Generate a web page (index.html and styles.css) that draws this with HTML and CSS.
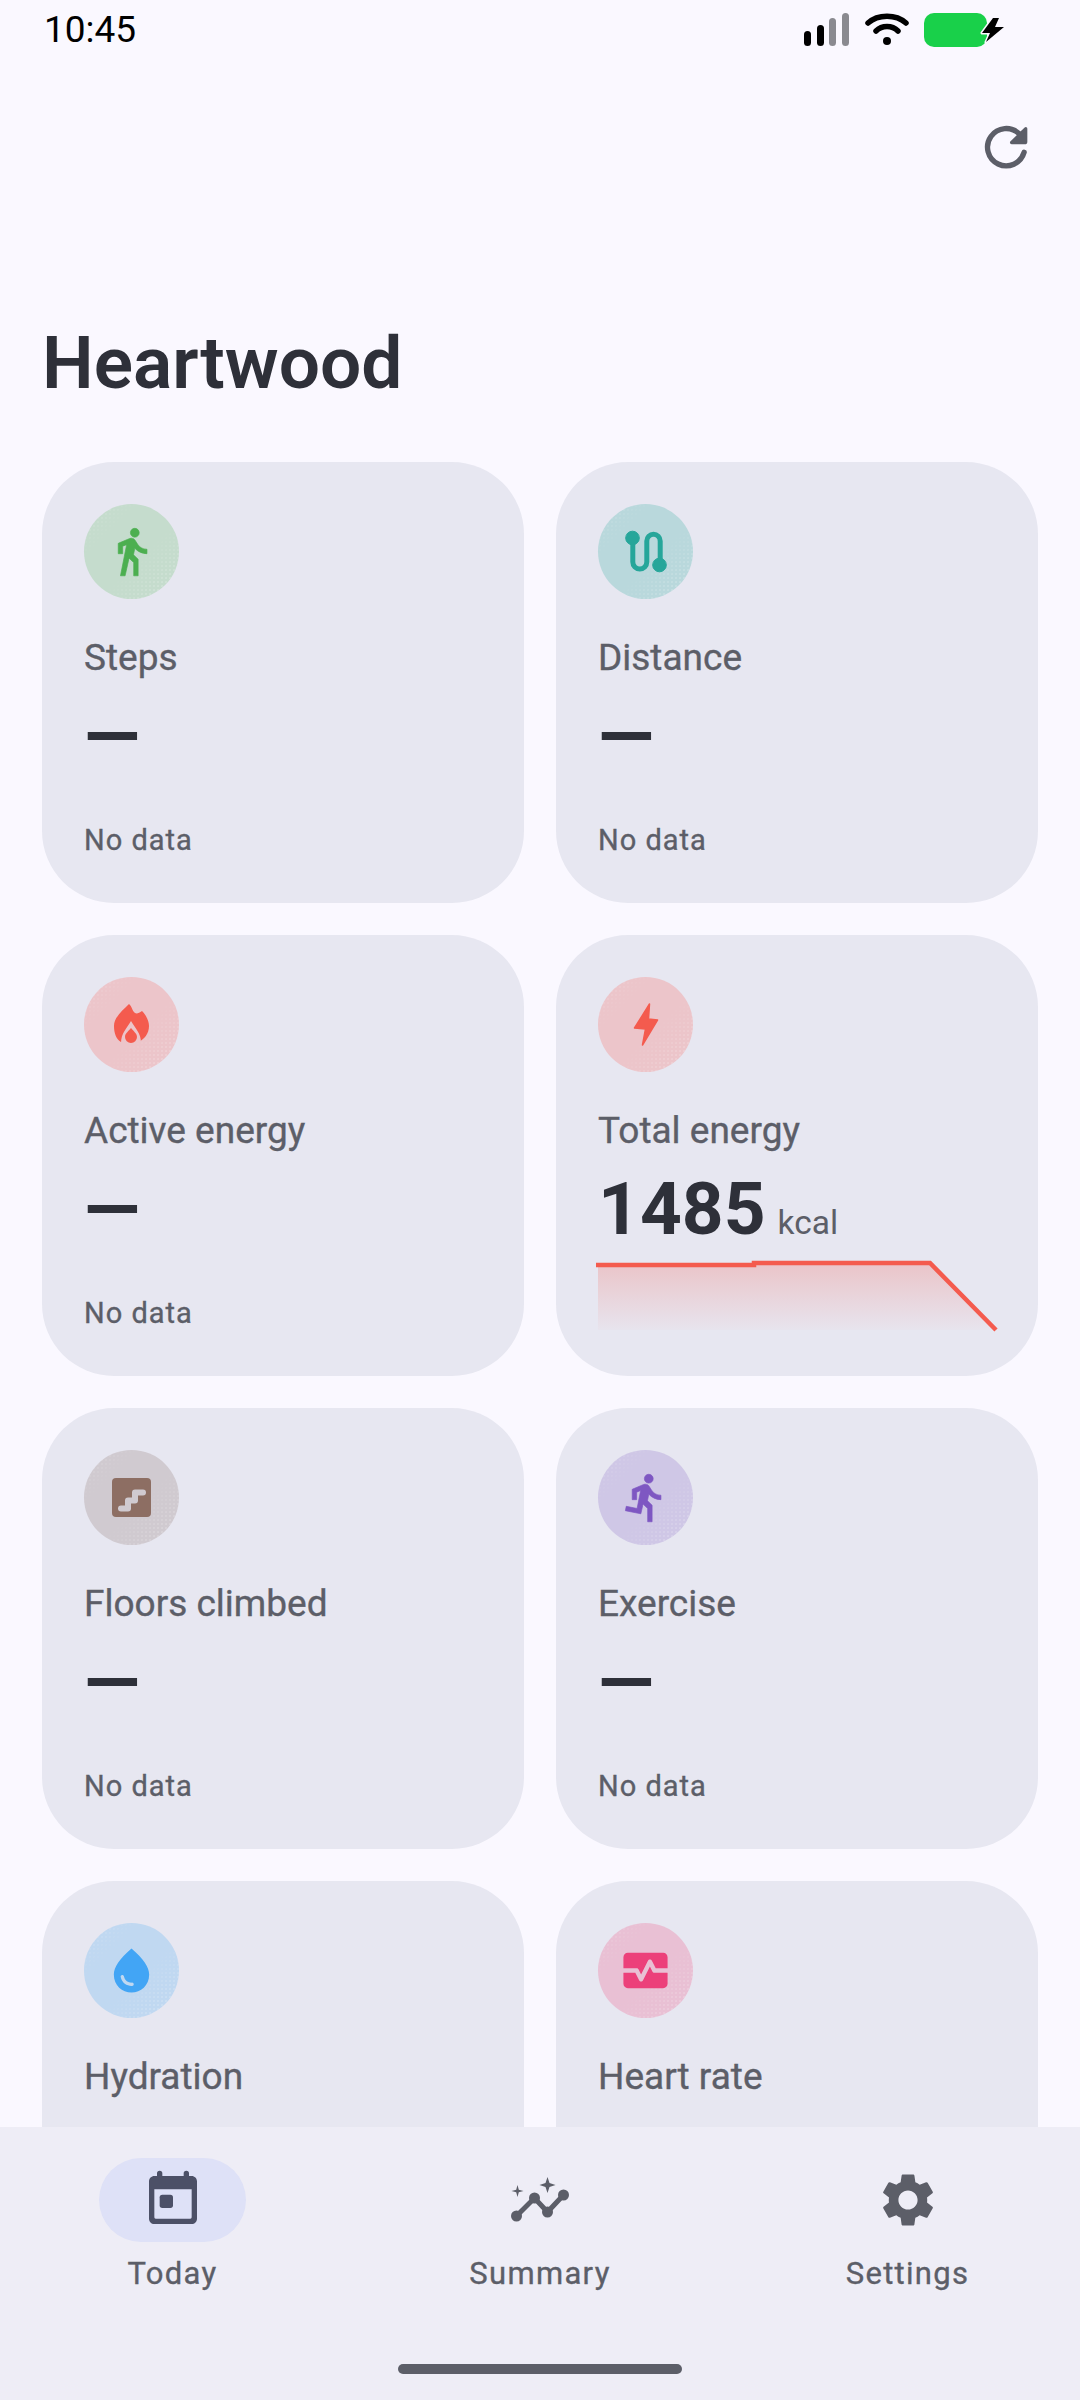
FILE: index.html
```html
<!DOCTYPE html>
<html lang="en">

<head>
    <meta charset="UTF-8">
    <meta name="viewport" content="width=device-width, initial-scale=1.0">
    <title>Heartwood</title>
    <link rel="stylesheet" href="styles.css">
</head>

<body>
    <div class="status-bar">
        <span class="clock">10:45</span>
        <div class="status-icons">
            <svg class="signal" width="46" height="34" viewBox="0 0 46 34">
                <rect x="0" y="18" width="7" height="15" rx="3.5" fill="#000" />
                <rect x="13" y="12" width="7" height="21" rx="3.5" fill="#000" />
                <rect x="25" y="5" width="7" height="28" rx="3.5" fill="#8a8a90" />
                <rect x="38" y="0" width="7" height="33" rx="3.5" fill="#8a8a90" />
            </svg>
            <svg class="wifi" width="44" height="34" viewBox="0 0 44 34">
                <path d="M3 10 C13 1 31 1 41 10" fill="none" stroke="#000" stroke-width="5.5" stroke-linecap="round" />
                <path d="M11 18 C17 12 27 12 33 18" fill="none" stroke="#000" stroke-width="5.5" stroke-linecap="round" />
                <circle cx="22" cy="28" r="4" fill="#000" />
            </svg>
            <svg class="battery" width="82" height="36" viewBox="0 0 82 36">
                <rect x="0" y="1" width="63" height="34" rx="10" fill="#19d04a" />
                <path d="M69 6 L58 21 L66 21 L62 30 L80 15 L71 15 L75 6 Z" fill="#000" stroke="#faf8ff" stroke-width="3" paint-order="stroke" stroke-linejoin="round" />
            </svg>
        </div>
    </div>

    <div class="toolbar">
        <svg class="refresh" width="64" height="64" viewBox="0 0 24 24">
            <path class="refresh-arc" d="M18.8 14A7 7 0 1 1 17 7.1" />
            <path d="M20 5.2V10a1 1 0 0 1-1 1H14.2a.7.7 0 0 1-.5-1.2L19 4.7a.6.6 0 0 1 1 .5z" />
        </svg>
    </div>

    <div class="content">
        <h1 class="page-title">Heartwood</h1>

        <div class="card-grid">
            <div class="card">
                <div class="icon-circle green">
                    <svg class="person" width="53" height="53" viewBox="0 0 24 24">
                        <path d="M13.5 5.5c1.1 0 2-.9 2-2s-.9-2-2-2-2 .9-2 2 .9 2 2 2zM9.8 8.9L7 23h2.1l1.8-8 2.1 2v6h2v-7.5l-2.1-2 .6-3C14.8 12 16.8 13 19 13v-2c-1.9 0-3.5-1-4.3-2.4l-1-1.6c-.4-.6-1-1-1.7-1-.3 0-.5.1-.8.1L6 8.3V13h2V9.6l1.8-.7" />
                    </svg>
                </div>
                <div class="card-label">Steps</div>
                <div class="card-value">—</div>
                <div class="card-note">No data</div>
            </div>

            <div class="card">
                <div class="icon-circle teal">
                    <svg width="53" height="53" viewBox="0 0 53 53">
                        <path class="route-line" d="M13.8 13V37a7 7 0 0 0 14 0V16a6.7 6.7 0 0 1 13.4 0V40" />
                        <circle cx="13.5" cy="13" r="6.8" />
                        <circle cx="40.5" cy="40" r="6.8" />
                    </svg>
                </div>
                <div class="card-label">Distance</div>
                <div class="card-value">—</div>
                <div class="card-note">No data</div>
            </div>

            <div class="card">
                <div class="icon-circle red">
                    <svg width="53" height="53" viewBox="0 0 53 53">
                        <path d="M24 6C27 8 27 13 30 15C32 16 34 15 37 13C41 17 44 23 44 28C44 36 39 41 34 44H16C11 41 9 35 9 28C9 19 18 12 24 6Z" />
                        <path class="flame-gap" d="M16 45C16 35 22 30 26 23C30 30 36 35 36 45Z" />
                        <path d="M26 30C28 33 32 35 32 39A6 6 0 0 1 20 39C20 35 24 33 26 30Z" />
                    </svg>
                </div>
                <div class="card-label">Active energy</div>
                <div class="card-value">—</div>
                <div class="card-note">No data</div>
            </div>

            <div class="card">
                <div class="icon-circle red">
                    <svg width="53" height="53" viewBox="0 0 53 53">
                        <path class="bolt" d="M30.5 6L15.5 30L26.5 31L23.5 47L38.5 22L29.5 21Z" />
                    </svg>
                </div>
                <div class="card-label">Total energy</div>
                <div class="card-value">1485<span class="card-unit">kcal</span></div>
                <svg class="sparkline" width="398" height="74" viewBox="0 0 398 74">
                    <defs>
                        <linearGradient id="sparkFill" x1="0" y1="0" x2="0" y2="1">
                            <stop offset="0" stop-color="#f45b4e" stop-opacity="0.25" />
                            <stop offset="1" stop-color="#f45b4e" stop-opacity="0.02" />
                        </linearGradient>
                    </defs>
                    <path d="M0 5H156V3H332L398 70H0Z" fill="url(#sparkFill)" />
                    <path d="M-2 5H156V3H332L398 70" fill="none" stroke="#f45b4e" stroke-width="4.5" />
                </svg>
            </div>

            <div class="card">
                <div class="icon-circle brown">
                    <svg width="53" height="53" viewBox="0 0 53 53">
                        <rect x="7" y="7" width="39" height="39" rx="4" />
                        <path class="stair-line" d="M16 37.5H23V29.5H30V21.5H38" />
                    </svg>
                </div>
                <div class="card-label">Floors climbed</div>
                <div class="card-value">—</div>
                <div class="card-note">No data</div>
            </div>

            <div class="card">
                <div class="icon-circle purple">
                    <svg class="person" width="53" height="53" viewBox="0 0 24 24">
                        <path d="M13.49 5.48c1.1 0 2-.9 2-2s-.9-2-2-2-2 .9-2 2 .9 2 2 2zm-3.6 13.9l1-4.4 2.1 2v6h2v-7.5l-2.1-2 .6-3c1.3 1.5 3.3 2.5 5.5 2.5v-2c-1.9 0-3.5-1-4.3-2.4l-1-1.6c-.4-.6-1-1-1.7-1-.3 0-.5.1-.8.1l-5.2 2.2v4.7h2v-3.4l1.8-.7-1.6 8.1-4.9-1-.4 2 7 1.4z" />
                    </svg>
                </div>
                <div class="card-label">Exercise</div>
                <div class="card-value">—</div>
                <div class="card-note">No data</div>
            </div>

            <div class="card">
                <div class="icon-circle blue">
                    <svg width="53" height="53" viewBox="0 0 24 24">
                        <path fill-rule="evenodd" d="M12 2c-5.33 4.55-8 8.48-8 11.8 0 4.98 3.8 8.2 8 8.2s8-3.22 8-8.2c0-3.32-2.67-7.25-8-11.8zM7.83 14c.37 0 .67.26.74.62.41 2.22 2.28 2.98 3.64 2.87.43-.02.79.32.79.75 0 .4-.32.73-.72.75-2.13.13-4.62-1.09-5.19-4.12-.08-.45.28-.87.74-.87z" />
                    </svg>
                </div>
                <div class="card-label">Hydration</div>
                <div class="card-value">0.00<span class="card-unit">L</span></div>
            </div>

            <div class="card">
                <div class="icon-circle pink">
                    <svg width="53" height="53" viewBox="0 0 24 24">
                        <path d="M15.11 12.45L14 10.24l-3.11 6.21c-.16.34-.51.55-.89.55s-.73-.21-.89-.55L7.38 13H2v5c0 1.1.9 2 2 2h16c1.1 0 2-.9 2-2v-5h-6c-.38 0-.73-.21-.89-.55zM20 4H4c-1.1 0-2 .9-2 2v5h6c.38 0 .73.21.89.55L10 13.76l3.11-6.21c.34-.68 1.45-.68 1.79 0L16.62 11H22V6c0-1.1-.9-2-2-2z" />
                    </svg>
                </div>
                <div class="card-label">Heart rate</div>
                <div class="card-value">70<span class="card-unit">bpm</span></div>
            </div>
        </div>
    </div>

    <div class="bottom-nav">
        <div class="nav-items">
            <div class="nav-item">
                <div class="nav-icon active">
                    <svg width="64" height="64" viewBox="0 0 24 24">
                        <path d="M19 3h-1V2a1 1 0 0 0-2 0v1H8V2a1 1 0 0 0-2 0v1H5C3.9 3 3 3.9 3 5v14c0 1.1.9 2 2 2h14c1.1 0 2-.9 2-2V5c0-1.1-.9-2-2-2zm-.5 16h-13a.5.5 0 0 1-.5-.5V8h14v10.5a.5.5 0 0 1-.5.5z" />
                        <rect x="7" y="10" width="5" height="5" rx="1" />
                    </svg>
                </div>
                <div class="nav-label">Today</div>
            </div>
            <div class="nav-item">
                <div class="nav-icon">
                    <svg width="64" height="64" viewBox="0 0 64 64">
                        <path class="trend-line" d="M8.5 48L26.5 30L39.5 44L55.5 27" />
                        <circle cx="8.5" cy="48" r="5.5" />
                        <circle cx="26.5" cy="30" r="5.5" />
                        <circle cx="39.5" cy="44" r="5.5" />
                        <circle cx="55.5" cy="27" r="5.5" />
                        <path d="M39.5 9L41.5 15L47.5 17L41.5 19L39.5 25L37.5 19L31.5 17L37.5 15Z" />
                        <path d="M9.5 17L10.8 21.7L15.5 23L10.8 24.3L9.5 29L8.2 24.3L3.5 23L8.2 21.7Z" />
                    </svg>
                </div>
                <div class="nav-label">Summary</div>
            </div>
            <div class="nav-item">
                <div class="nav-icon">
                    <svg width="64" height="64" viewBox="0 0 24 24">
                        <path d="M19.14 12.94c.04-.3.06-.61.06-.94 0-.32-.02-.64-.07-.94l2.03-1.58c.18-.14.23-.41.12-.61l-1.92-3.32c-.12-.22-.37-.29-.59-.22l-2.39.96c-.5-.38-1.03-.7-1.62-.94l-.36-2.54c-.04-.24-.24-.41-.48-.41h-3.84c-.24 0-.43.17-.47.41l-.36 2.54c-.59.24-1.13.57-1.62.94l-2.39-.96c-.22-.08-.47 0-.59.22L2.74 8.87c-.12.21-.08.47.12.61l2.03 1.58c-.05.3-.09.63-.09.94s.02.64.07.94l-2.03 1.58c-.18.14-.23.41-.12.61l1.92 3.32c.12.22.37.29.59.22l2.39-.96c.5.38 1.03.7 1.62.94l.36 2.54c.05.24.24.41.48.41h3.84c.24 0 .44-.17.47-.41l.36-2.54c.59-.24 1.13-.56 1.62-.94l2.39.96c.22.08.47 0 .59-.22l1.92-3.32c.12-.22.07-.47-.12-.61l-2.01-1.58zM12 15.6c-1.98 0-3.6-1.62-3.6-3.6s1.62-3.6 3.6-3.6 3.6 1.62 3.6 3.6-1.62 3.6-3.6 3.6z" />
                    </svg>
                </div>
                <div class="nav-label">Settings</div>
            </div>
        </div>
        <div class="home-bar"></div>
    </div>
</body>

</html>
```

FILE: styles.css
```css
body {
    font-family: 'Roboto', sans-serif;
    background-color: #faf8ff;
    color: #2e3039;
    margin: 0;
    padding: 0;
    width: 1080px;
    height: 2400px;
    overflow: hidden;
    display: flex;
    flex-direction: column;
}

.status-bar {
    height: 60px;
    padding: 0 74px 0 44px;
    display: flex;
    justify-content: space-between;
    align-items: center;
}

.clock {
    font-size: 37px;
    color: #000;
    line-height: 60px;
}

.status-icons {
    display: flex;
    align-items: center;
    gap: 15px;
}

.toolbar {
    margin-top: 55px;
    padding: 0 42px;
    display: flex;
    justify-content: flex-end;
}

.refresh {
    fill: #5c5e68;
}

.refresh-arc {
    fill: none;
    stroke: #5c5e68;
    stroke-width: 2;
    stroke-linecap: round;
}

/* scrolling part, the last row runs under the nav */
.content {
    flex: 1;
    min-height: 0;
    overflow: hidden;
    padding: 0 42px;
}

.page-title {
    font-size: 73px;
    font-weight: 600;
    line-height: 84px;
    margin: 142px 0 57px;
}

.card-grid {
    display: grid;
    grid-template-columns: minmax(0, 1fr) minmax(0, 1fr);
    grid-auto-rows: 441px;
    gap: 32px;
}

.card {
    background-color: #e7e7f1;
    border-radius: 72px;
    padding: 42px 42px 45px;
    display: flex;
    flex-direction: column;
}

.icon-circle {
    width: 95px;
    height: 95px;
    border-radius: 50%;
    flex-shrink: 0;
    position: relative;
    overflow: hidden;
    display: flex;
    align-items: center;
    justify-content: center;
}

/* the fine speckle in the circle corners */
.icon-circle::before {
    content: "";
    position: absolute;
    inset: 0;
    background-image: radial-gradient(circle, rgba(255, 255, 255, 0.22) 0.7px, transparent 1px);
    background-size: 4px 4px;
    -webkit-mask-image: linear-gradient(135deg, #000 0%, transparent 30%, transparent 55%, #000 90%);
    mask-image: linear-gradient(135deg, #000 0%, transparent 30%, transparent 55%, #000 90%);
}

.icon-circle svg {
    position: relative;
}

.green { background-color: #c5dccd; fill: #4caf50; }
.teal { background-color: #b9d8dc; fill: #26a69a; stroke: #26a69a; }
.red { background-color: #ecc5ca; fill: #f45b4e; }
.brown { background-color: #d0cad0; fill: #8d6e63; }
.purple { background-color: #cfc7e6; fill: #7e57c2; }
.blue { background-color: #c0d8f1; fill: #42a5f5; }
.pink { background-color: #e9c0d4; fill: #ec407a; }

.green .person { stroke: #4caf50; }
.purple .person { stroke: #7e57c2; }

.person {
    stroke-width: 0.3;
    stroke-linejoin: round;
}

.route-line {
    fill: none;
    stroke-width: 5;
}

.flame-gap {
    fill: #ecc5ca;
}

.bolt {
    stroke: #f45b4e;
    stroke-width: 1.5;
    stroke-linejoin: round;
}

.stair-line {
    fill: none;
    stroke: #d0cad0;
    stroke-width: 6;
    stroke-linejoin: round;
    stroke-linecap: round;
}

.card-label {
    font-size: 37px;
    line-height: 48px;
    color: #5c5e68;
    -webkit-text-stroke: 0.35px #5c5e68;
    margin-top: 35px;
}

.card-value {
    font-size: 73px;
    font-weight: 700;
    line-height: 84px;
    margin-top: 12px;
    white-space: nowrap;
}

.card-unit {
    font-size: 33.5px;
    font-weight: 400;
    line-height: 1;
    color: #5c5e68;
    margin-left: 12px;
}

.card-note {
    font-size: 29px;
    line-height: 36px;
    letter-spacing: 1px;
    color: #5c5e68;
    -webkit-text-stroke: 0.35px #5c5e68;
    margin-top: auto;
}

.sparkline {
    display: block;
    margin-top: 9px;
    overflow: visible;
}

.bottom-nav {
    height: 273px;
    flex-shrink: 0;
    background-color: #eeedf6;
    display: flex;
    flex-direction: column;
    align-items: center;
}

.nav-items {
    align-self: stretch;
    display: flex;
    justify-content: space-between;
    padding: 31px 99px 0;
}

.nav-item {
    width: 147px;
    display: flex;
    flex-direction: column;
    align-items: center;
}

.nav-icon {
    width: 147px;
    height: 84px;
    border-radius: 42px;
    display: flex;
    align-items: center;
    justify-content: center;
    fill: #5c5e68;
}

.nav-icon.active {
    background-color: #dee1f7;
    fill: #4c5067;
}

.trend-line {
    fill: none;
    stroke: #5c5e68;
    stroke-width: 5;
}

.nav-label {
    font-size: 31px;
    line-height: 40px;
    letter-spacing: 1.3px;
    color: #5c5e68;
    -webkit-text-stroke: 0.35px #5c5e68;
    margin-top: 12px;
    white-space: nowrap;
}

.home-bar {
    width: 284px;
    height: 10px;
    border-radius: 5px;
    background-color: #5c5e68;
    margin-top: auto;
    margin-bottom: 26px;
}
```
